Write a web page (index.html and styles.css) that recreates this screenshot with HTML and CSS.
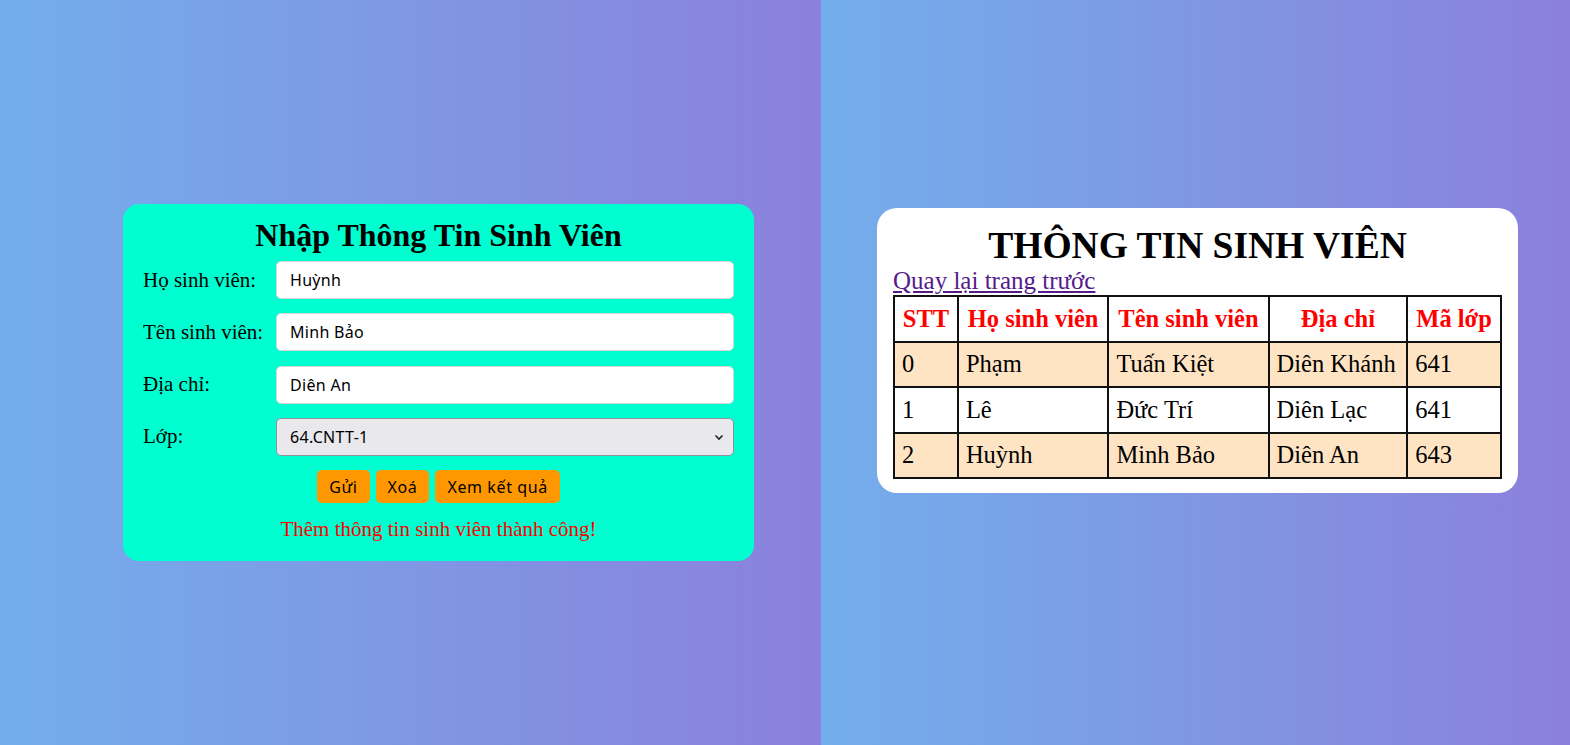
FILE: index.html
```html
<!DOCTYPE html>
<html lang="vi">
<head>
<meta charset="utf-8">
<title>Sinh viên</title>
<link rel="stylesheet" href="styles.css">
</head>
<body>
<div class="screen">
  <section class="panel panel-left">
    <form class="form-card">
      <h2 class="form-title">Nhập Thông Tin Sinh Viên</h2>
      <div class="row">
        <label class="label">Họ sinh viên:</label>
        <input class="field" type="text" value="Huỳnh">
      </div>
      <div class="row">
        <label class="label">Tên sinh viên:</label>
        <input class="field" type="text" value="Minh Bảo">
      </div>
      <div class="row">
        <label class="label">Địa chỉ:</label>
        <input class="field" type="text" value="Diên An">
      </div>
      <div class="row">
        <label class="label">Lớp:</label>
        <div class="select-wrap">
          <select class="field select"><option>64.CNTT-1</option></select>
          <svg class="chev" width="10" height="7" viewBox="0 0 10 7"><path d="M1.5 1.5 L5 5 L8.5 1.5" fill="none" stroke="#222" stroke-width="1.6"/></svg>
        </div>
      </div>
      <div class="buttons">
        <button type="button" class="btn">Gửi</button>
        <button type="button" class="btn">Xoá</button>
        <button type="button" class="btn">Xem kết quả</button>
      </div>
      <p class="msg">Thêm thông tin sinh viên thành công!</p>
    </form>
  </section>
  <section class="panel panel-right">
    <div class="result-card">
      <h1 class="result-title">THÔNG TIN SINH VIÊN</h1>
      <a class="back" href="#">Quay lại trang trước</a>
      <table class="tbl">
        <tr><th>STT</th><th>Họ sinh viên</th><th>Tên sinh viên</th><th>Địa chỉ</th><th>Mã lớp</th></tr>
        <tr class="alt"><td>0</td><td>Phạm</td><td>Tuấn Kiệt</td><td>Diên Khánh</td><td>641</td></tr>
        <tr><td>1</td><td>Lê</td><td>Đức Trí</td><td>Diên Lạc</td><td>641</td></tr>
        <tr class="alt"><td>2</td><td>Huỳnh</td><td>Minh Bảo</td><td>Diên An</td><td>643</td></tr>
      </table>
    </div>
  </section>
</div>
</body>
</html>
```
FILE: styles.css
```css
* { box-sizing: border-box; }
html, body { margin: 0; padding: 0; }
body { font-family: "Liberation Serif", "Times New Roman", serif; }
.screen { display: flex; width: 1570px; height: 745px; overflow: hidden; }
.panel { height: 745px; background: linear-gradient(to right, #73aeec, #8b80dc); }
.panel-left { width: 821px; padding: 204px 0 0 123px; }
.panel-right { width: 749px; padding: 208px 0 0 56px; }

.form-card {
  width: 631px; height: 357px;
  background: #00ffd0;
  border-radius: 16px;
  padding: 12px 20px 0 20px;
}
.form-title { margin: 0 0 7px; text-align: center; font-size: 32px; font-weight: bold; line-height: 38px; }
.row { display: flex; align-items: center; margin-bottom: 14.3px; }
.label { width: 133px; flex: none; font-size: 21px; }
.field {
  width: 458px; height: 38px; flex: none;
  border: 1px solid #d6d6d6; border-radius: 5px;
  background: #fff;
  padding: 0 13px;
  font-family: "Noto Sans", sans-serif; font-size: 16px; letter-spacing: 0.3px; color: #000;
}
.select-wrap { position: relative; width: 458px; flex: none; }
.select { appearance: none; -webkit-appearance: none; background: #e9e8ed; border: 1px solid #8f8f9d; }
.chev { position: absolute; right: 10px; top: 16px; pointer-events: none; }
.buttons { display: flex; justify-content: center; gap: 6px; margin-top: 1px; }
.btn {
  height: 33px; padding: 0 12px;
  background: #ff9800; border: none; border-radius: 5px;
  font-family: "Noto Sans", sans-serif; font-size: 16px; letter-spacing: 0.6px; color: #000;
}
.msg { margin: 14px 0 0; text-align: center; color: #f00; font-size: 21px; }

.result-card {
  width: 641px; height: 285px;
  background: #fff; border-radius: 20px;
  padding: 16px 16px 0 16px;
}
.result-title { margin: 0; text-align: center; font-size: 37.5px; font-weight: bold; line-height: 44px; }
.back { display: inline-block; color: #551a8b; font-size: 25px; line-height: 27px; margin-top: -1px; }
.tbl { width: 100%; border-collapse: collapse; margin-top: 1px; }
.tbl th, .tbl td { border: 2px solid #111; padding: 0 7px; height: 45.5px; font-size: 24.5px; white-space: nowrap; }
.tbl th { color: #f00; font-weight: bold; }
.tbl td { text-align: left; }
.tbl .alt td { background: #ffe4c4; }
```
